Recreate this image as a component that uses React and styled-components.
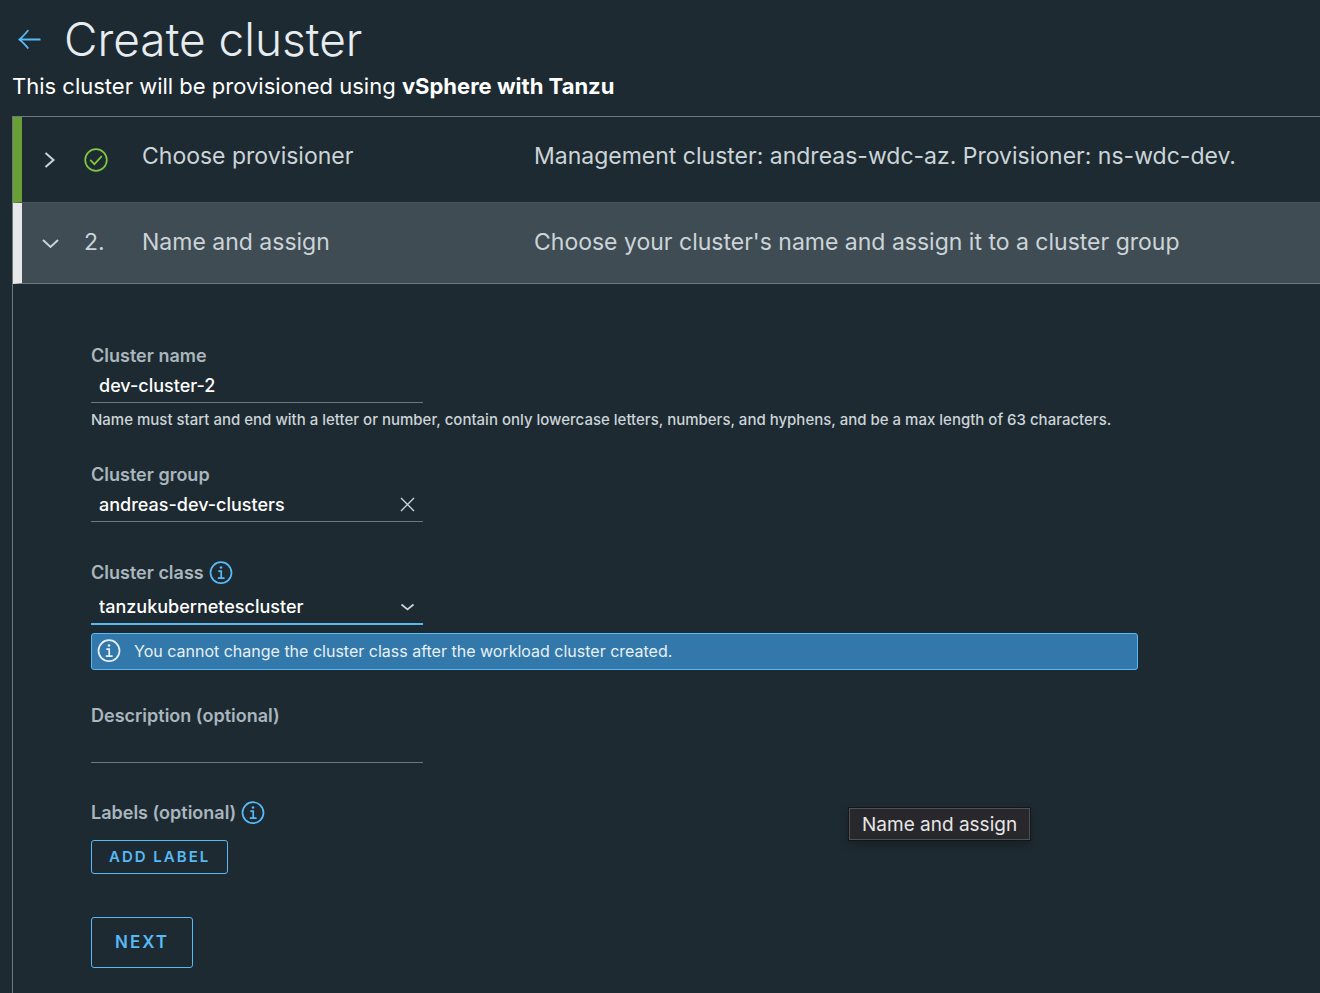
import React, { useState } from "react";
import styled, { createGlobalStyle } from "styled-components";

const GlobalStyle = createGlobalStyle`
  *, *::before, *::after { box-sizing: border-box; }
  body {
    margin: 0;
    background: #1e2a31;
    color: #cbd4d8;
    font-family: Inter, "Liberation Sans", sans-serif;
  }
  button, input, select { font: inherit; }
`;

const Page = styled.main`
  min-height: 100vh;
  padding-left: 12px;
  padding-top: 11px;
  display: flex;
  flex-direction: column;
`;

const Header = styled.header`
  display: flex;
  align-items: center;
  gap: 22px;
  height: 55px;
  padding-left: 6px;
`;

const BackLink = styled.a`
  display: flex;
  color: #57b9f5;
`;

const Title = styled.h1`
  margin: 0;
  font-size: 46px;
  line-height: 54px;
  font-weight: 300;
  color: #e6ecef;
`;

const Intro = styled.p`
  margin: 5px 0 15px;
  font-size: 22px;
  line-height: 30px;
  color: #ffffff;
`;

const Wizard = styled.section`
  position: relative;
  flex: 1;
  border-left: 1px solid #6c7a80;
  border-top: 1px solid #6c7a80;
`;

const StepHeader = styled.button`
  display: grid;
  grid-template-columns: 42px 58px 392px 1fr;
  align-items: center;
  width: 100%;
  height: ${(p) => (p.$active ? 81 : 86)}px;
  padding: 0 0 ${(p) => (p.$active ? 2 : 8)}px 20px;
  border: 0;
  border-left: 9px solid ${(p) => (p.$active ? "#e8e8e8" : "#69a036")};
  border-bottom: 1px solid ${(p) => (p.$active ? "#6c7a80" : "#47545b")};
  background: ${(p) => (p.$active ? "#404c53" : "transparent")};
  color: #cbd4d8;
  font-size: 23px;
  line-height: 30px;
  text-align: left;
`;

const StepIcon = styled.span`
  display: flex;
  padding-top: ${(p) => (p.$low ? 8 : 4)}px;
`;

const Form = styled.form`
  display: flex;
  flex-direction: column;
  align-items: flex-start;
  padding: 60px 24px 24px 78px;
`;

const Field = styled.div`
  display: flex;
  flex-direction: column;
  align-items: flex-start;
  width: 100%;
  margin-bottom: ${(p) => p.$gap || 39}px;
`;

const LabelRow = styled.div`
  display: flex;
  align-items: center;
  gap: 5px;
  height: 24px;
  margin-bottom: ${(p) => p.$space || 0}px;
`;

const Label = styled.label`
  font-size: 18px;
  line-height: 24px;
  font-weight: 600;
  color: #a9b6be;
`;

const InfoButton = styled.button`
  display: flex;
  padding: 0;
  border: 0;
  background: none;
  color: #57b9f5;
`;

const Control = styled.div`
  display: flex;
  align-items: center;
  width: 332px;
  max-width: 100%;
  height: 35px;
  padding: 0 8px;
  border-bottom: ${(p) => (p.$focused ? "2px solid #57b9f5" : "1px solid #6c7a80")};
  color: #cbd4d8;
`;

const TextInput = styled.input`
  flex: 1;
  min-width: 0;
  height: 100%;
  padding: 0;
  border: 0;
  outline: 0;
  background: transparent;
  color: #ffffff;
  font-size: 18px;
  font-weight: 500;
`;

const Select = styled.select`
  flex: 1;
  min-width: 0;
  height: 100%;
  margin-right: -15px;
  padding: 0 15px 0 0;
  border: 0;
  outline: 0;
  appearance: none;
  background: transparent;
  color: #ffffff;
  font-size: 18px;
  font-weight: 500;
`;

const ClearButton = styled.button`
  display: flex;
  padding: 0;
  border: 0;
  background: none;
  color: #cbd4d8;
`;

const Helper = styled.p`
  margin: 5px 0 0;
  font-size: 15px;
  line-height: 24px;
  font-weight: 500;
`;

const Alert = styled.div`
  display: flex;
  align-items: center;
  gap: 13px;
  width: 100%;
  max-width: 1047px;
  height: 37px;
  margin-top: 8px;
  padding: 0 5px 2px;
  border: 1px solid #57b9f5;
  border-radius: 3px;
  background: #3278aa;
  color: #e8f0f5;
  font-size: 16px;
  line-height: 24px;
`;

const OutlineButton = styled.button`
  height: ${(p) => (p.$large ? 51 : 34)}px;
  padding: 0 ${(p) => (p.$large ? 23 : 17)}px 2px;
  border: 1px solid #57b9f5;
  border-radius: 3px;
  background: transparent;
  color: #57b9f5;
  font-size: ${(p) => (p.$large ? 17 : 15)}px;
  font-weight: 600;
  letter-spacing: 2px;
`;

const Tooltip = styled.div`
  position: absolute;
  left: 836px;
  top: 691px;
  height: 32px;
  padding: 0 12px;
  border: 1px solid #505155;
  background: #28282c;
  box-shadow: 0 0 0 1px #11171b, 0 4px 10px rgba(0, 0, 0, 0.3);
  color: #e6e6e6;
  font-size: 19px;
  line-height: 31px;
  white-space: nowrap;
`;

const Svg = ({ w, h, sw = 2, children }) => (
  <svg width={w} height={h} viewBox={`0 0 ${w} ${h}`} fill="none" stroke="currentColor" strokeWidth={sw} aria-hidden="true">
    {children}
  </svg>
);

const ArrowLeft = () => (
  <Svg w={24} h={20} sw={1.8}>
    <path d="M22.5 10.5H1.5M10.3 1.2C7.5 4.5 4.6 8 1.3 10.5C4.6 13 7.5 16.2 10.3 19.5" strokeLinejoin="round" />
  </Svg>
);

const ChevronRight = () => (
  <Svg w={16} h={16}><path d="M3.5 1L11.5 8L3.5 15" /></Svg>
);

const ChevronDown = () => (
  <Svg w={17} h={12}><path d="M1 2L8.5 9L16 2" /></Svg>
);

const SmallChevron = () => (
  <Svg w={15} h={10} sw={1.7}><path d="M1.5 2.5L7.5 7.5L13.5 2.5" /></Svg>
);

const Check = () => (
  <Svg w={24} h={24} sw={1.7}>
    <g stroke="#7fc83f">
      <circle cx="12" cy="12" r="10.8" />
      <path d="M6.2 11.8L10.4 16.2L17.8 8.2" />
    </g>
  </Svg>
);

const Close = () => (
  <Svg w={15} h={15} sw={1.4}><path d="M1 1L14 14M14 1L1 14" /></Svg>
);

const Info = () => (
  <Svg w={24} h={24} sw={1.7}>
    <circle cx="12" cy="11.7" r="10.5" />
    <path d="M9.3 10.2H12.2V17M8.8 17.2H15.6" />
    <circle cx="12" cy="6.5" r="1.3" fill="currentColor" stroke="none" />
  </Svg>
);

export default function App() {
  const [name, setName] = useState("dev-cluster-2");
  const [group, setGroup] = useState("andreas-dev-clusters");
  const [description, setDescription] = useState("");

  return (
    <>
      <GlobalStyle />
      <Page>
        <Header>
          <BackLink href="#clusters" aria-label="Back to clusters"><ArrowLeft /></BackLink>
          <Title>Create cluster</Title>
        </Header>
        <Intro>This cluster will be provisioned using <strong>vSphere with Tanzu</strong></Intro>
        <Wizard>
          <StepHeader type="button" aria-expanded="false">
            <StepIcon $low><ChevronRight /></StepIcon>
            <StepIcon $low><Check /></StepIcon>
            <span>Choose provisioner</span>
            <span>Management cluster: andreas-wdc-az. Provisioner: ns-wdc-dev.</span>
          </StepHeader>
          <StepHeader type="button" aria-expanded="true" $active>
            <StepIcon><ChevronDown /></StepIcon>
            <span>2.</span>
            <span>Name and assign</span>
            <span>Choose your cluster's name and assign it to a cluster group</span>
          </StepHeader>
          <Form onSubmit={(e) => e.preventDefault()}>
            <Field $gap={31}>
              <LabelRow><Label htmlFor="name">Cluster name</Label></LabelRow>
              <Control>
                <TextInput id="name" value={name} onChange={(e) => setName(e.target.value)} />
              </Control>
              <Helper>
                Name must start and end with a letter or number, contain only lowercase letters, numbers, and hyphens, and be a max length of 63 characters.
              </Helper>
            </Field>
            <Field>
              <LabelRow><Label htmlFor="group">Cluster group</Label></LabelRow>
              <Control>
                <TextInput id="group" value={group} onChange={(e) => setGroup(e.target.value)} />
                <ClearButton type="button" aria-label="Clear cluster group" onClick={() => setGroup("")}><Close /></ClearButton>
              </Control>
            </Field>
            <Field $gap={34}>
              <LabelRow $space={5}>
                <Label htmlFor="class">Cluster class</Label>
                <InfoButton type="button" aria-label="About cluster class"><Info /></InfoButton>
              </LabelRow>
              <Control $focused>
                <Select id="class" defaultValue="tanzukubernetescluster">
                  <option>tanzukubernetescluster</option>
                </Select>
                <SmallChevron />
              </Control>
              <Alert role="note">
                <Info />
                <span>You cannot change the cluster class after the workload cluster created.</span>
              </Alert>
            </Field>
            <Field $gap={38}>
              <LabelRow><Label htmlFor="description">Description (optional)</Label></LabelRow>
              <Control>
                <TextInput id="description" value={description} onChange={(e) => setDescription(e.target.value)} />
              </Control>
            </Field>
            <Field $gap={43}>
              <LabelRow $space={15}>
                <Label htmlFor="add-label">Labels (optional)</Label>
                <InfoButton type="button" aria-label="About labels"><Info /></InfoButton>
              </LabelRow>
              <OutlineButton id="add-label" type="button">ADD LABEL</OutlineButton>
            </Field>
            <OutlineButton type="submit" $large>NEXT</OutlineButton>
          </Form>
          <Tooltip role="tooltip">Name and assign</Tooltip>
        </Wizard>
      </Page>
    </>
  );
}
